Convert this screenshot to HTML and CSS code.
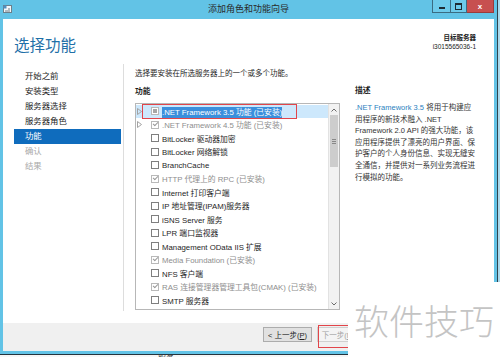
FILE: index.html
```html
<!DOCTYPE html>
<html lang="zh-CN">
<head>
  <meta charset="UTF-8" />
  <title>添加角色和功能向导</title>
  <link rel="stylesheet" href="styles.css">
</head>
<body>

  <div class="screen">
    <div class="window">
      <div class="titlebar">
        <svg class="app-icon" width="11" height="11" viewBox="0 0 11 11">
          <rect x="1.5" y="2.5" width="8" height="7" fill="#f4f7f9" stroke="#6d7f8a" />
          <rect x="1.5" y="2.5" width="3" height="3" fill="#4f8fc0" />
          <path d="M3 8 H8 M6 6 H8" stroke="#6d7f8a" />
        </svg>
        <span class="title">添加角色和功能向导</span>
        <div class="controls">
          <span class="ctl min"><i></i></span>
          <span class="ctl max"><i></i></span>
          <span class="ctl close">x</span>
        </div>
      </div>

      <div class="client">
        <div class="header">
          <h1>选择功能</h1>
          <div class="target">
            <b>目标服务器</b>
            <span>i3015565036-1</span>
          </div>
        </div>

        <div class="main">
          <ul class="steps">
            <li>开始之前</li>
            <li>安装类型</li>
            <li>服务器选择</li>
            <li>服务器角色</li>
            <li class="active">功能</li>
            <li class="off">确认</li>
            <li class="off">结果</li>
          </ul>

          <div class="page">
            <div class="features">
              <p class="intro">选择要安装在所选服务器上的一个或多个功能。</p>
              <h2>功能</h2>
              <div class="listbox">
                <ul class="items">
                  <li class="item selected">
                    <span class="expander"><svg width="5" height="7" viewBox="0 0 5 7"><path d="M0.5 0.5 L4.5 3.5 L0.5 6.5 Z" fill="none" stroke="#a3a3a3" /></svg></span>
                    <span class="box partial"></span>
                    <span class="label"><span class="sel">.NET Framework 3.5 功能 (已安装)</span></span>
                  </li>
                  <li class="item installed">
                    <span class="expander"><svg width="5" height="7" viewBox="0 0 5 7"><path d="M0.5 0.5 L4.5 3.5 L0.5 6.5 Z" fill="none" stroke="#a3a3a3" /></svg></span>
                    <span class="box checked"></span>
                    <span class="label">.NET Framework 4.5 功能 (已安装)</span>
                  </li>
                  <li class="item"><span class="expander"></span><span class="box"></span><span class="label">BitLocker 驱动器加密</span></li>
                  <li class="item"><span class="expander"></span><span class="box"></span><span class="label">BitLocker 网络解锁</span></li>
                  <li class="item"><span class="expander"></span><span class="box"></span><span class="label">BranchCache</span></li>
                  <li class="item installed"><span class="expander"></span><span class="box checked"></span><span class="label">HTTP 代理上的 RPC (已安装)</span></li>
                  <li class="item"><span class="expander"></span><span class="box"></span><span class="label">Internet 打印客户端</span></li>
                  <li class="item"><span class="expander"></span><span class="box"></span><span class="label">IP 地址管理(IPAM)服务器</span></li>
                  <li class="item"><span class="expander"></span><span class="box"></span><span class="label">iSNS Server 服务</span></li>
                  <li class="item"><span class="expander"></span><span class="box"></span><span class="label">LPR 端口监视器</span></li>
                  <li class="item"><span class="expander"></span><span class="box"></span><span class="label">Management OData IIS 扩展</span></li>
                  <li class="item installed"><span class="expander"></span><span class="box checked"></span><span class="label">Media Foundation (已安装)</span></li>
                  <li class="item"><span class="expander"></span><span class="box"></span><span class="label">NFS 客户端</span></li>
                  <li class="item installed"><span class="expander"></span><span class="box checked"></span><span class="label">RAS 连接管理器管理工具包(CMAK) (已安装)</span></li>
                  <li class="item"><span class="expander"></span><span class="box"></span><span class="label">SMTP 服务器</span></li>
                  <li class="item"><span class="expander"></span><span class="box"></span><span class="label">SNMP 服务</span></li>
                </ul>
                <div class="scrollbar">
                  <span class="arrow">
                    <svg width="6" height="4" viewBox="0 0 6 4"><path d="M0.5 3.5 L3 1 L5.5 3.5" fill="none" stroke="#6b6b6b" /></svg>
                  </span>
                  <span class="thumb"><i></i></span>
                  <span class="track"></span>
                  <span class="arrow">
                    <svg width="6" height="4" viewBox="0 0 6 4"><path d="M0.5 0.5 L3 3 L5.5 0.5" fill="none" stroke="#6b6b6b" /></svg>
                  </span>
                </div>
              </div>
            </div>

            <div class="desc">
              <h2>描述</h2>
              <p>
                <span class="link">.NET Framework 3.5</span> 将用于构建应<br>
                用程序的新技术融入 .NET<br>
                Framework 2.0 API 的强大功能，该<br>
                应用程序提供了漂亮的用户界面、保<br>
                护客户的个人身份信息、实现无缝安<br>
                全通信，并提供对一系列业务流程进<br>
                行模拟的功能。
              </p>
            </div>
          </div>
        </div>

        <div class="footer">
          <button class="btn">&lt; 上一步(<u>P</u>)</button>
          <button class="btn" disabled>下一步(<u>N</u>) &gt;</button>
          <button class="btn covered">安装(<u>I</u>)</button>
          <button class="btn covered">取消</button>
        </div>
      </div>
    </div>
    <div class="edge"></div>
  </div>

  <div class="below"><span>服务</span></div>

  <div class="mark mark-row"></div>
  <div class="mark mark-next"></div>
  <div class="watermark">软件技巧</div>

</body>
</html>
```

FILE: styles.css
```css
    body {
      margin: 0;
      width: 500px;
      height: 357px;
      overflow: hidden;
      position: relative;
      background: #eef1f2;
      font-family: "Liberation Sans", "Noto Sans CJK SC", sans-serif;
      color: #1e1e1e;
    }

    .screen {
      display: flex;
      height: 354px;
    }

    .window {
      width: 497px;
      padding: 0 3px 3px;
      box-sizing: border-box;
      background: #62c3e6;
      display: flex;
      flex-direction: column;
    }

    .edge {
      flex: 1;
      border-left: 1px solid #30424c;
      background: #a9d9ec;
    }

    /* title bar */
    .titlebar {
      height: 19px;
      display: grid;
      grid-template-columns: 1fr auto 1fr;
      align-items: start;
    }

    .app-icon {
      margin: 3px 0 0 -1px;
    }

    .title {
      font-size: 9px;
      line-height: 19px;
      color: #2a2a2a;
    }

    .controls {
      justify-self: end;
      display: flex;
    }

    .ctl {
      height: 13px;
      box-sizing: border-box;
      border: 1px solid #3b6c82;
      border-top: none;
      display: flex;
      align-items: center;
      justify-content: center;
    }

    .ctl.min {
      width: 18px;
      background: #6dcaea;
      border-right: none;
    }

    .ctl.min i {
      width: 6px;
      height: 2px;
      margin-top: 3px;
      background: #1d2b33;
    }

    .ctl.max {
      width: 17px;
      background: #6dcaea;
    }

    .ctl.max i {
      width: 5px;
      height: 4px;
      border: 1px solid #1d2b33;
      border-top-width: 2px;
    }

    .ctl.close {
      width: 27px;
      background: #c75050;
      border-color: #9a3c3c;
      border-left: none;
      color: #fff;
      font-weight: bold;
      font-size: 8px;
    }

    /* client area */
    .client {
      flex: 1;
      background: #fff;
      display: flex;
      flex-direction: column;
    }

    .header {
      height: 41px;
      padding: 0 18px 0 11px;
      display: flex;
      justify-content: space-between;
      align-items: flex-start;
    }

    .header h1 {
      margin: 16px 0 0;
      font-size: 15.5px;
      line-height: 18px;
      font-weight: normal;
      color: #1f70a8;
      font-family: "Noto Sans CJK SC", sans-serif;
    }

    .target {
      margin-top: 15px;
      text-align: right;
      font-size: 6.5px;
      line-height: 8.5px;
      color: #222;
    }

    .target b,
    .target span {
      display: block;
    }

    .main {
      flex: 1;
      display: flex;
      min-height: 0;
    }

    .steps {
      width: 121px;
      box-sizing: border-box;
      margin: 4px 0 12px;
      padding: 5px 0 0 11px;
      list-style: none;
      border-right: 1px solid #dddddd;
    }

    .steps li {
      width: 107px;
      height: 15px;
      line-height: 15px;
      padding-left: 11px;
      box-sizing: border-box;
      font-size: 8.4px;
      color: #222;
    }

    .steps li.active {
      background: #0f6cbd;
      color: #fff;
    }

    .steps li.off {
      color: #a9a9a9;
    }

    .page {
      flex: 1;
      display: flex;
      padding: 8px 0 0 11px;
    }

    .features {
      width: 205px;
    }

    .intro {
      margin: 0;
      font-size: 7.5px;
      line-height: 12px;
      white-space: nowrap;
    }

    .features h2,
    .desc h2 {
      margin: 6px 0 5px;
      font-size: 7.8px;
      line-height: 12px;
    }

    .listbox {
      height: 207px;
      box-sizing: border-box;
      border: 1px solid #b7b7b7;
      display: flex;
      overflow: hidden;
    }

    .items {
      flex: 1;
      margin: 0;
      padding: 0.5px 0 0;
      list-style: none;
      overflow: hidden;
    }

    .item {
      height: 13.5px;
      display: flex;
      align-items: center;
      font-size: 7.8px;
      white-space: nowrap;
    }

    .item.selected {
      background: #cde8fc;
    }

    .item.installed {
      color: #8e8e8e;
    }

    .expander {
      width: 14px;
      padding-left: 1px;
      display: flex;
      align-items: center;
    }

    .box {
      position: relative;
      width: 8px;
      height: 8px;
      box-sizing: border-box;
      border: 1px solid #7f7f7f;
      background: #fff;
      margin-right: 3px;
    }

    .box.checked,
    .box.partial {
      border-color: #b9b9b9;
    }

    .box.checked::after {
      content: "";
      position: absolute;
      left: 1.5px;
      top: -0.5px;
      width: 2px;
      height: 4px;
      border: solid #9a9a9a;
      border-width: 0 1px 1px 0;
      transform: rotate(45deg);
    }

    .box.partial::after {
      content: "";
      position: absolute;
      left: 1px;
      top: 1px;
      width: 4px;
      height: 4px;
      background: #a6a6a6;
    }

    .sel {
      background: #3b8fdc;
      color: #fff;
      padding: 1px 0;
    }

    .scrollbar {
      width: 10px;
      background: #f2f2f2;
      border-left: 1px solid #e2e2e2;
      display: flex;
      flex-direction: column;
    }

    .arrow {
      height: 11px;
      display: flex;
      align-items: center;
      justify-content: center;
    }

    .thumb {
      height: 52px;
      margin: 0 1px;
      background: #cdcdcd;
      display: flex;
      align-items: center;
      justify-content: center;
    }

    .thumb i {
      width: 4px;
      height: 3px;
      border-top: 1px solid #888;
      border-bottom: 1px solid #888;
      background: linear-gradient(#888, #888) center / 100% 1px no-repeat;
    }

    .track {
      flex: 1;
    }

    .desc {
      width: 125px;
      margin-left: 15px;
      padding-top: 11px;
    }

    .desc p {
      margin: 0;
      font-size: 7.5px;
      line-height: 11.6px;
      color: #333;
      white-space: nowrap;
    }

    .desc .link {
      color: #2a7fc0;
    }

    /* buttons */
    .footer {
      height: 28px;
      background: #f0f0f0;
      display: flex;
      justify-content: flex-end;
      align-items: flex-start;
      gap: 5px;
      padding: 4px 20px 0 0;
      box-sizing: border-box;
    }

    .btn {
      width: 49px;
      height: 15px;
      padding: 0;
      border: 1px solid #acacac;
      background: #e1e1e1;
      font-family: "Liberation Sans", "Noto Sans CJK SC", sans-serif;
      font-size: 7.5px;
      color: #222;
    }

    .btn:disabled {
      background: #f4f4f4;
      border-color: #d0d0d0;
      color: #a2a2a2;
    }

    /* sits under the watermark box */
    .btn.covered {
      visibility: hidden;
    }

    .below {
      height: 3px;
      border-top: 1px solid #24343d;
      background: #f6f6f6;
      overflow: hidden;
      padding-left: 158px;
      font-size: 8px;
      line-height: 8px;
      color: #333;
    }

    /* overlays */
    .mark {
      position: absolute;
      border: 1px solid #e2454a;
    }

    .mark-row {
      left: 142px;
      top: 104px;
      width: 153px;
      height: 13px;
    }

    .mark-next {
      left: 318px;
      top: 325px;
      width: 34px;
      height: 21px;
    }

    .watermark {
      position: absolute;
      left: 348px;
      top: 282px;
      width: 152px;
      height: 75px;
      background: #fff;
      display: flex;
      align-items: center;
      justify-content: center;
      font-family: "Noto Sans CJK SC", sans-serif;
      font-weight: 300;
      font-size: 35px;
      color: #c4c4c4;
    }
```
